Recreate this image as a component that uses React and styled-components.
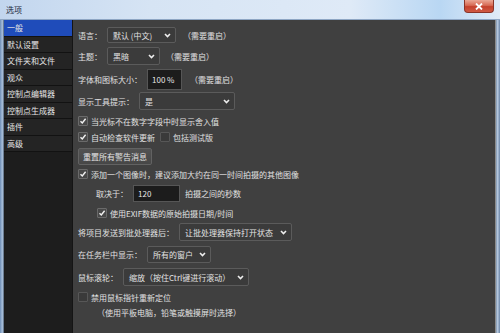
import React from 'react';
import styled, { createGlobalStyle } from 'styled-components';

const Global = createGlobalStyle`
   html, body { margin: 0; padding: 0; background: #404040; }
   body { font-family: "Noto Sans CJK SC", "Noto Sans", "Liberation Sans", sans-serif; }
`;

const Window = styled.div`
   width: 500px;
   height: 333px;
   display: flex;
   flex-direction: column;
   overflow: hidden;
   background: #404040;
`;

const TitleBar = styled.div`
   height: 20px;
   flex: none;
   display: flex;
   align-items: flex-start;
   justify-content: space-between;
   background: linear-gradient(90deg, #c2d6ee 0%, #d6e4f4 30%, #dfeaf7 70%, #b9d7f3 88%, #e0ebf7 100%);
   border-bottom: 1px solid #8ea6c4;
   box-sizing: border-box;
`;

const Title = styled.span`
   font-size: 8px;
   line-height: 8px;
   color: #1b2a3c;
   margin: 6px 0 0 6px;
`;

const CloseBtn = styled.div`
   width: 30px;
   height: 13px;
   margin-right: 6px;
   border: 1px solid #8a3428;
   border-top: none;
   border-radius: 0 0 4px 4px;
   background: linear-gradient(180deg, #eaa896 0%, #d76a54 45%, #c4412c 55%, #d05a44 100%);
   display: flex;
   align-items: center;
   justify-content: center;
   box-sizing: border-box;
`;

const Body = styled.div`
   flex: 1;
   display: flex;
   min-height: 0;
`;

const Frame = styled.div`
   flex: none;
   width: ${p => p.$w}px;
   background: ${p => p.$bg};
`;

const Sidebar = styled.div`
   width: 68px;
   flex: none;
   background: #1d1d1d;
   border-right: 1px solid #151515;
   display: flex;
   flex-direction: column;
`;

const NavItem = styled.div`
   height: 16.5px;
   box-sizing: border-box;
   padding-left: 3px;
   display: flex;
   align-items: center;
   font-size: 8px;
   color: #e4e4e4;
   background: ${p => (p.$active ? '#1f4cba' : '#242424')};
   border-bottom: 1px solid #121212;
`;

const Content = styled.div`
   flex: 1;
   background: #404040;
   padding: 7px 0 0 5px;
   display: flex;
   flex-direction: column;
   color: #e0e0e0;
   font-size: 8px;
   border-right: 1px solid #8c8c8c;
`;

const Row = styled.div`
   display: flex;
   align-items: center;
   height: ${p => p.$h}px;
   margin-top: ${p => p.$mt || 0}px;
   padding-left: ${p => p.$indent || 0}px;
   flex: none;
`;

const Label = styled.span`
   margin-right: 5px;
   white-space: nowrap;
`;

const Note = styled.span`
   margin-left: ${p => p.$ml || 7}px;
   white-space: nowrap;
`;

const SelectBox = styled.div`
   width: ${p => p.$w}px;
   height: 100%;
   box-sizing: border-box;
   border: 1px solid #5b5b5b;
   border-radius: 2px;
   background: #3b3b3b;
   display: flex;
   align-items: center;
   justify-content: space-between;
   padding: 0 4px 0 5px;
   white-space: nowrap;
   color: #e2e2e2;
`;

const InputBox = styled.div`
   width: ${p => p.$w}px;
   height: 100%;
   box-sizing: border-box;
   border: 1px solid #565656;
   background: #1c1c1c;
   display: flex;
   align-items: center;
   padding-left: 4px;
   color: #e6e6e6;
`;

const Box = styled.span`
   width: 10px;
   height: 10px;
   flex: none;
   box-sizing: border-box;
   border: 1px solid ${p => (p.$on ? '#6a6a6a' : '#575757')};
   background: ${p => (p.$on ? '#484848' : '#3a3a3a')};
   border-radius: 1px;
   margin-right: 3px;
   display: flex;
   align-items: center;
   justify-content: center;
`;

const Button = styled.div`
   width: 74px;
   height: 100%;
   box-sizing: border-box;
   border: 1px solid #626262;
   border-radius: 2px;
   background: linear-gradient(180deg, #525252, #474747);
   display: flex;
   align-items: center;
   justify-content: center;
   color: #e2e2e2;
   white-space: nowrap;
`;

const Chevron = () => (
   <svg width="7" height="5" viewBox="0 0 7 5">
      <path d="M1 1 L3.5 3.5 L6 1" fill="none" stroke="#eeeeee" strokeWidth="1.6" />
   </svg>
);

const Check = ({ on, children, ml }) => (
   <>
      <Box $on={on} style={ml ? { marginLeft: ml } : undefined}>
         {on && (
            <svg width="8" height="8" viewBox="0 0 8 8">
               <path d="M1.5 4.2 L3.3 6 L6.6 1.8" fill="none" stroke="#f2f2f2" strokeWidth="1.4" />
            </svg>
         )}
      </Box>
      <span style={{ whiteSpace: 'nowrap' }}>{children}</span>
   </>
);

const Select = ({ w, children }) => (
   <SelectBox $w={w}>
      <span>{children}</span>
      <Chevron />
   </SelectBox>
);

const nav = ['一般', '默认设置', '文件夹和文件', '观众', '控制点编辑器', '控制点生成器', '插件', '高级'];

export default function App() {
   return (
      <Window>
         <Global />
         <TitleBar>
            <Title>选项</Title>
            <CloseBtn>
               <svg width="8" height="7" viewBox="0 0 8 7">
                  <path d="M1 0.5 L7 6.5 M7 0.5 L1 6.5" stroke="#ffffff" strokeWidth="1.8" />
               </svg>
            </CloseBtn>
         </TitleBar>
         <Body>
            <Frame $w={4} $bg="linear-gradient(90deg, #6d8db5, #a9c0dc 60%, #4f5f72)" />
            <Sidebar>
               {nav.map((n, i) => (
                  <NavItem key={n} $active={i === 0}>{n}</NavItem>
               ))}
            </Sidebar>
            <Content>
               <Row $h={16}>
                  <Label>语言：</Label>
                  <Select w={69}>默认 (中文)</Select>
                  <Note>（需要重启）</Note>
               </Row>
               <Row $h={18} $mt={4}>
                  <Label>主题：</Label>
                  <Select w={53}>黑暗</Select>
                  <Note $ml={6}>（需要重启）</Note>
               </Row>
               <Row $h={21} $mt={4}>
                  <Label>字体和图标大小：</Label>
                  <InputBox $w={35}>100 %</InputBox>
                  <Note $ml={8}>（需要重启）</Note>
               </Row>
               <Row $h={18} $mt={2}>
                  <Label>显示工具提示：</Label>
                  <Select w={96}>是</Select>
               </Row>
               <Row $h={12} $mt={5}>
                  <Check on>当光标不在数字字段中时显示舍入值</Check>
               </Row>
               <Row $h={12} $mt={4}>
                  <Check on>自动检查软件更新</Check>
                  <Check ml={5}>包括测试版</Check>
               </Row>
               <Row $h={17} $mt={5}>
                  <Button>重置所有警告消息</Button>
               </Row>
               <Row $h={12} $mt={3}>
                  <Check on>添加一个图像时，建议添加大约在同一时间拍摄的其他图像</Check>
               </Row>
               <Row $h={17} $mt={5} $indent={18}>
                  <Label>取决于：</Label>
                  <InputBox $w={47}>120</InputBox>
                  <Note $ml={5}>拍摄之间的秒数</Note>
               </Row>
               <Row $h={12} $mt={5} $indent={19}>
                  <Check on>使用EXIF数据的原始拍摄日期/时间</Check>
               </Row>
               <Row $h={18} $mt={4}>
                  <Label>将项目发送到批处理器后：</Label>
                  <Select w={113}>让批处理器保持打开状态</Select>
               </Row>
               <Row $h={17} $mt={5}>
                  <Label>在任务栏中显示：</Label>
                  <Select w={64}>所有的窗户</Select>
               </Row>
               <Row $h={18} $mt={5}>
                  <Label>鼠标滚轮：</Label>
                  <Select w={126}>缩放（按住Ctrl键进行滚动）</Select>
               </Row>
               <Row $h={12} $mt={5}>
                  <Check>禁用鼠标指针重新定位</Check>
               </Row>
               <Row $h={11} $mt={4} $indent={19}>
                  <span>（使用平板电脑，铅笔或触摸屏时选择）</span>
               </Row>
            </Content>
            <Frame $w={4} $bg="linear-gradient(90deg, #7d93ad, #b7c9df 40%, #6a84a6)" />
         </Body>
      </Window>
   );
}
